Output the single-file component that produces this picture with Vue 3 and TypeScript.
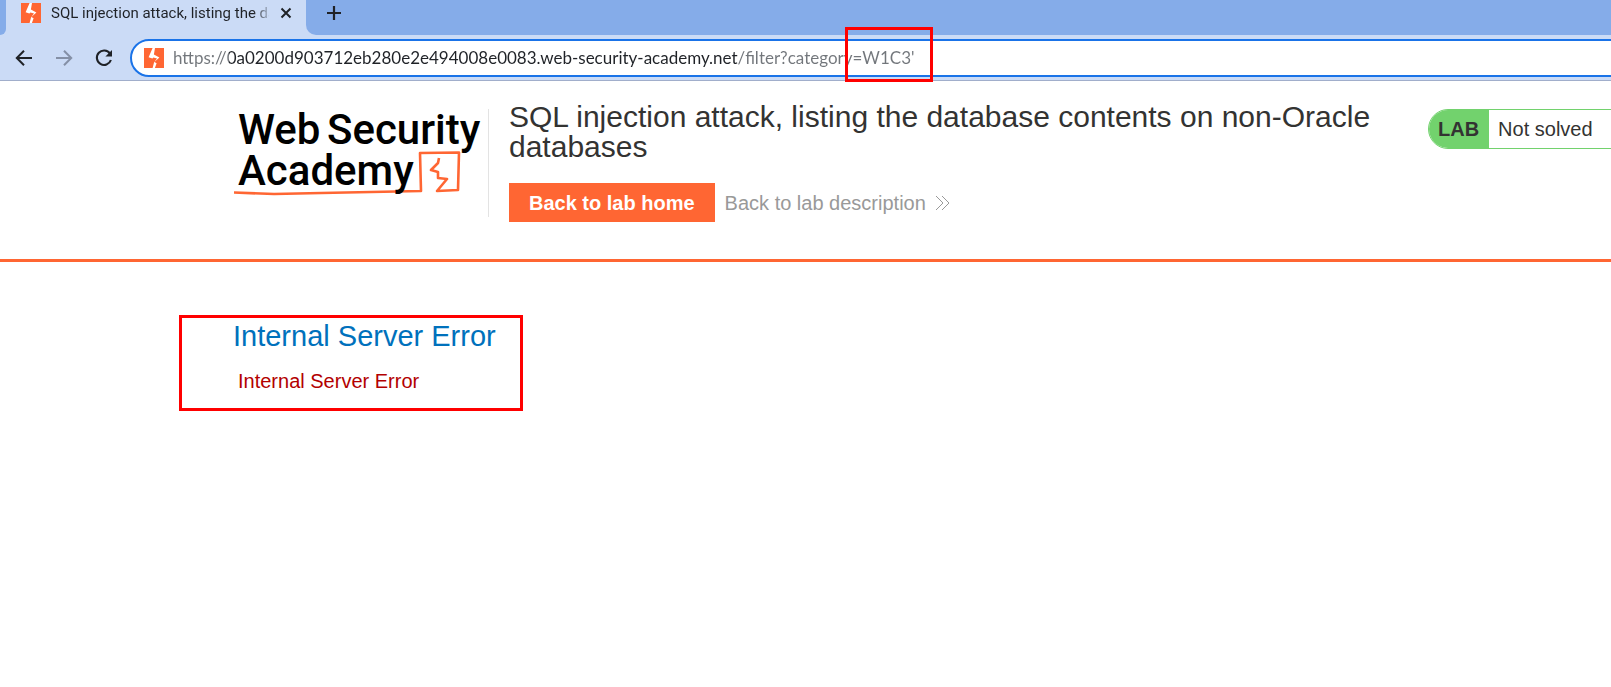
<script setup lang="ts">
import { ref } from 'vue'

const tabTitle = 'SQL injection attack, listing the da'
const url = ref("https://0a0200d903712eb280e2e494008e0083.web-security-academy.net/filter?category=W1C3'")
const labTitle = 'SQL injection attack, listing the database contents on non-Oracle databases'
const errorText = 'Internal Server Error'
</script>

<template>
  <div class="window">
    <header class="chrome">
      <div class="tabs">
        <div class="tab">
          <svg class="favicon" viewBox="0 0 20 20" aria-hidden="true">
            <rect width="20" height="20" fill="#ff6633" />
            <path d="M8.6 0H11L9.9 6.6L15.4 9.4L10.4 14L12.6 15.2L10.9 20H8.6L10.1 14.2L13 10.4L9.4 9.4L8.4 10.4L4.6 9.2Z" fill="#fff" />
          </svg>
          <span class="tab-title">{{ tabTitle }}</span>
          <button class="tab-close" type="button" aria-label="Close tab">
            <svg width="12" height="12" viewBox="0 0 12 12"><path d="M1.5 1.5L10.5 10.5M10.5 1.5L1.5 10.5" stroke="#1f2227" stroke-width="2" /></svg>
          </button>
        </div>
        <button class="new-tab" type="button" aria-label="New tab">
          <svg width="16" height="16" viewBox="0 0 16 16"><path d="M8 1V15M1 8H15" stroke="#1f2227" stroke-width="2.2" /></svg>
        </button>
      </div>
      <div class="toolbar">
        <button class="nav" type="button" aria-label="Back">
          <svg width="18" height="18" viewBox="0 0 18 18"><path d="M17 9H2M9 1.8L1.8 9L9 16.2" fill="none" stroke="#1f2227" stroke-width="2" /></svg>
        </button>
        <button class="nav" type="button" aria-label="Forward" disabled>
          <svg width="18" height="18" viewBox="0 0 18 18"><path d="M1 9H16M9 1.8L16.2 9L9 16.2" fill="none" stroke="#8590a6" stroke-width="2" /></svg>
        </button>
        <button class="nav" type="button" aria-label="Reload">
          <svg width="18" height="18" viewBox="0 0 18 18"><path d="M15 4.6A7.2 7.2 0 1 0 15.9 11" fill="none" stroke="#1f2227" stroke-width="2.1" /><path d="M17 1V7.6H10.4Z" fill="#1f2227" /></svg>
        </button>
        <label class="omnibox">
          <svg class="favicon" viewBox="0 0 20 20" aria-hidden="true">
            <rect width="20" height="20" fill="#ff6633" />
            <path d="M8.6 0H11L9.9 6.6L15.4 9.4L10.4 14L12.6 15.2L10.9 20H8.6L10.1 14.2L13 10.4L9.4 9.4L8.4 10.4L4.6 9.2Z" fill="#fff" />
          </svg>
          <input v-model="url" class="url" type="text" aria-label="Address" spellcheck="false" />
        </label>
      </div>
      <div class="mark mark-url"></div>
    </header>

    <section class="lab-header">
      <a class="logo" href="#" aria-label="Web Security Academy">
        <svg width="250" height="90" viewBox="0 0 250 90">
          <path d="M0 83.5L40 85C90 84 150 82.500 187 82L186 44L225 43.500L224 81L203 82L213 70L204 69V63L197 61L204 54L205 49" fill="none" stroke="#ff6633" stroke-width="2.6" stroke-linejoin="round" />
          <g class="logo-text">
            <text x="4" y="35">Web</text>
            <text x="93" y="35">Security</text>
            <text x="4" y="76">Academy</text>
          </g>
        </svg>
      </a>
      <div class="lab-info">
        <h1>{{ labTitle }}</h1>
        <div class="actions">
          <a class="home" href="#">Back to lab home</a>
          <a class="description" href="#">
            Back to lab description
            <svg width="15" height="16" viewBox="0 0 15 16"><path d="M1 1L8 8L1 15M7 1L14 8L7 15" fill="none" stroke="#999" stroke-width="1" /></svg>
          </a>
        </div>
      </div>
      <div class="status"><strong>LAB</strong><span>Not solved</span></div>
    </section>

    <main class="content">
      <div class="mark mark-error"></div>
      <h2>{{ errorText }}</h2>
      <p>{{ errorText }}</p>
    </main>
  </div>
</template>

<style>
body {
  background: #fff;
  overflow-x: hidden;
}
</style>

<style scoped>
.window {
  font-family: "Liberation Sans", Arial, sans-serif;
  color: #333332;
  overflow: hidden;
}
button {
  display: flex;
  align-items: center;
  justify-content: center;
  padding: 0;
  border: 0;
  background: none;
}
svg {
  display: block;
  flex: none;
}
.chrome {
  position: relative;
  background: #cbdbf6;
  border-bottom: 1px solid #a1aecb;
}
.tabs {
  display: flex;
  height: 35px;
  background: linear-gradient(#cbdbf6, #cbdbf6) 0 0 / 20px 100% no-repeat, #85ace9;
}
.tabs::before {
  content: "";
  width: 6px;
  background: #85ace9;
  border-bottom-right-radius: 6px;
}
.tab {
  display: flex;
  align-items: center;
  box-sizing: border-box;
  width: 310px;
  padding: 0 14px 9px 15px;
  background: #cbdbf6;
}
.favicon {
  width: 20px;
  height: 20px;
}
.tab-title {
  width: 218px;
  margin-left: 10px;
  white-space: nowrap;
  font: 15px/20px Roboto, sans-serif;
  color: #1f2227;
  mask-image: linear-gradient(to right, #000 202px, transparent 222px);
}
.tab-close {
  width: 20px;
  height: 20px;
  margin-left: 7px;
}
.new-tab {
  flex: 1;
  justify-content: flex-start;
  margin-left: -10px;
  padding: 0 0 9px 20px;
  background: #85ace9;
  border-bottom-left-radius: 10px;
}
.toolbar {
  display: flex;
  align-items: center;
  height: 45px;
  padding-left: 14px;
}
.nav {
  width: 20px;
  height: 20px;
  margin-right: 20px;
}
.omnibox {
  display: flex;
  align-items: center;
  flex: 1;
  height: 34px;
  margin: 0 -24px 0 -4px;
  padding-left: 12px;
  border: 2px solid #1a73e8;
  border-radius: 20px;
  background: #fff;
}
.url {
  flex: 1;
  height: 30px;
  margin-left: 9px;
  padding: 0;
  border: 0;
  outline: 0;
  font: 17px Lato, sans-serif;
  color: transparent;
  background: linear-gradient(to right, #72767b 56px, #1f2227 56px, #1f2227 565px, #72767b 565px);
  background-clip: text;
}
.mark {
  position: absolute;
  box-sizing: border-box;
  border: 3px solid #f00;
  pointer-events: none;
}
.mark-url {
  top: 27px;
  left: 845px;
  width: 88px;
  height: 55px;
}
.lab-header {
  display: flex;
  align-items: flex-start;
  padding: 28px 0 37px 234px;
  border-bottom: 3px solid #ff6633;
}
.logo {
  flex: none;
  width: 254px;
  height: 108px;
  border-right: 1px solid #e3e3e3;
}
.logo-text {
  font-family: Roboto, sans-serif;
  font-size: 42px;
  font-weight: 500;
  fill: #000;
}
.lab-info {
  flex: 1;
  margin: -7px 40px 0 20px;
}
h1,
h2 {
  margin: 0;
  font-size: 29px;
  line-height: 30px;
  font-weight: 400;
}
h1 {
  font-size: 30px;
}
.actions {
  display: flex;
  align-items: center;
  gap: 10px;
  margin-top: 21px;
  font-size: 20px;
  line-height: 38px;
}
a {
  text-decoration: none;
}
.home {
  padding: 1px 20px 0;
  background: #ff6633;
  color: #fff;
  font-weight: 700;
}
.description {
  display: flex;
  align-items: center;
  gap: 9px;
  padding-top: 1px;
  color: #999;
}
.status {
  display: flex;
  flex: none;
  width: 193px;
  margin-right: -10px;
  box-sizing: border-box;
  border: 1px solid #72d26d;
  border-radius: 20px 0 0 20px;
  overflow: hidden;
  font-size: 20px;
  line-height: 38px;
}
.status strong {
  padding: 0 10px 0 9px;
  background: #72d26d;
}
.status span {
  padding-left: 9px;
}
.content {
  position: relative;
  padding: 59px 0 40px 233px;
}
.mark-error {
  top: 53px;
  left: 179px;
  width: 344px;
  height: 96px;
}
h2 {
  color: #0071bc;
}
.content p {
  margin: 18px 0 0 5px;
  font-size: 20px;
  line-height: 24px;
  color: #b30000;
}
</style>
